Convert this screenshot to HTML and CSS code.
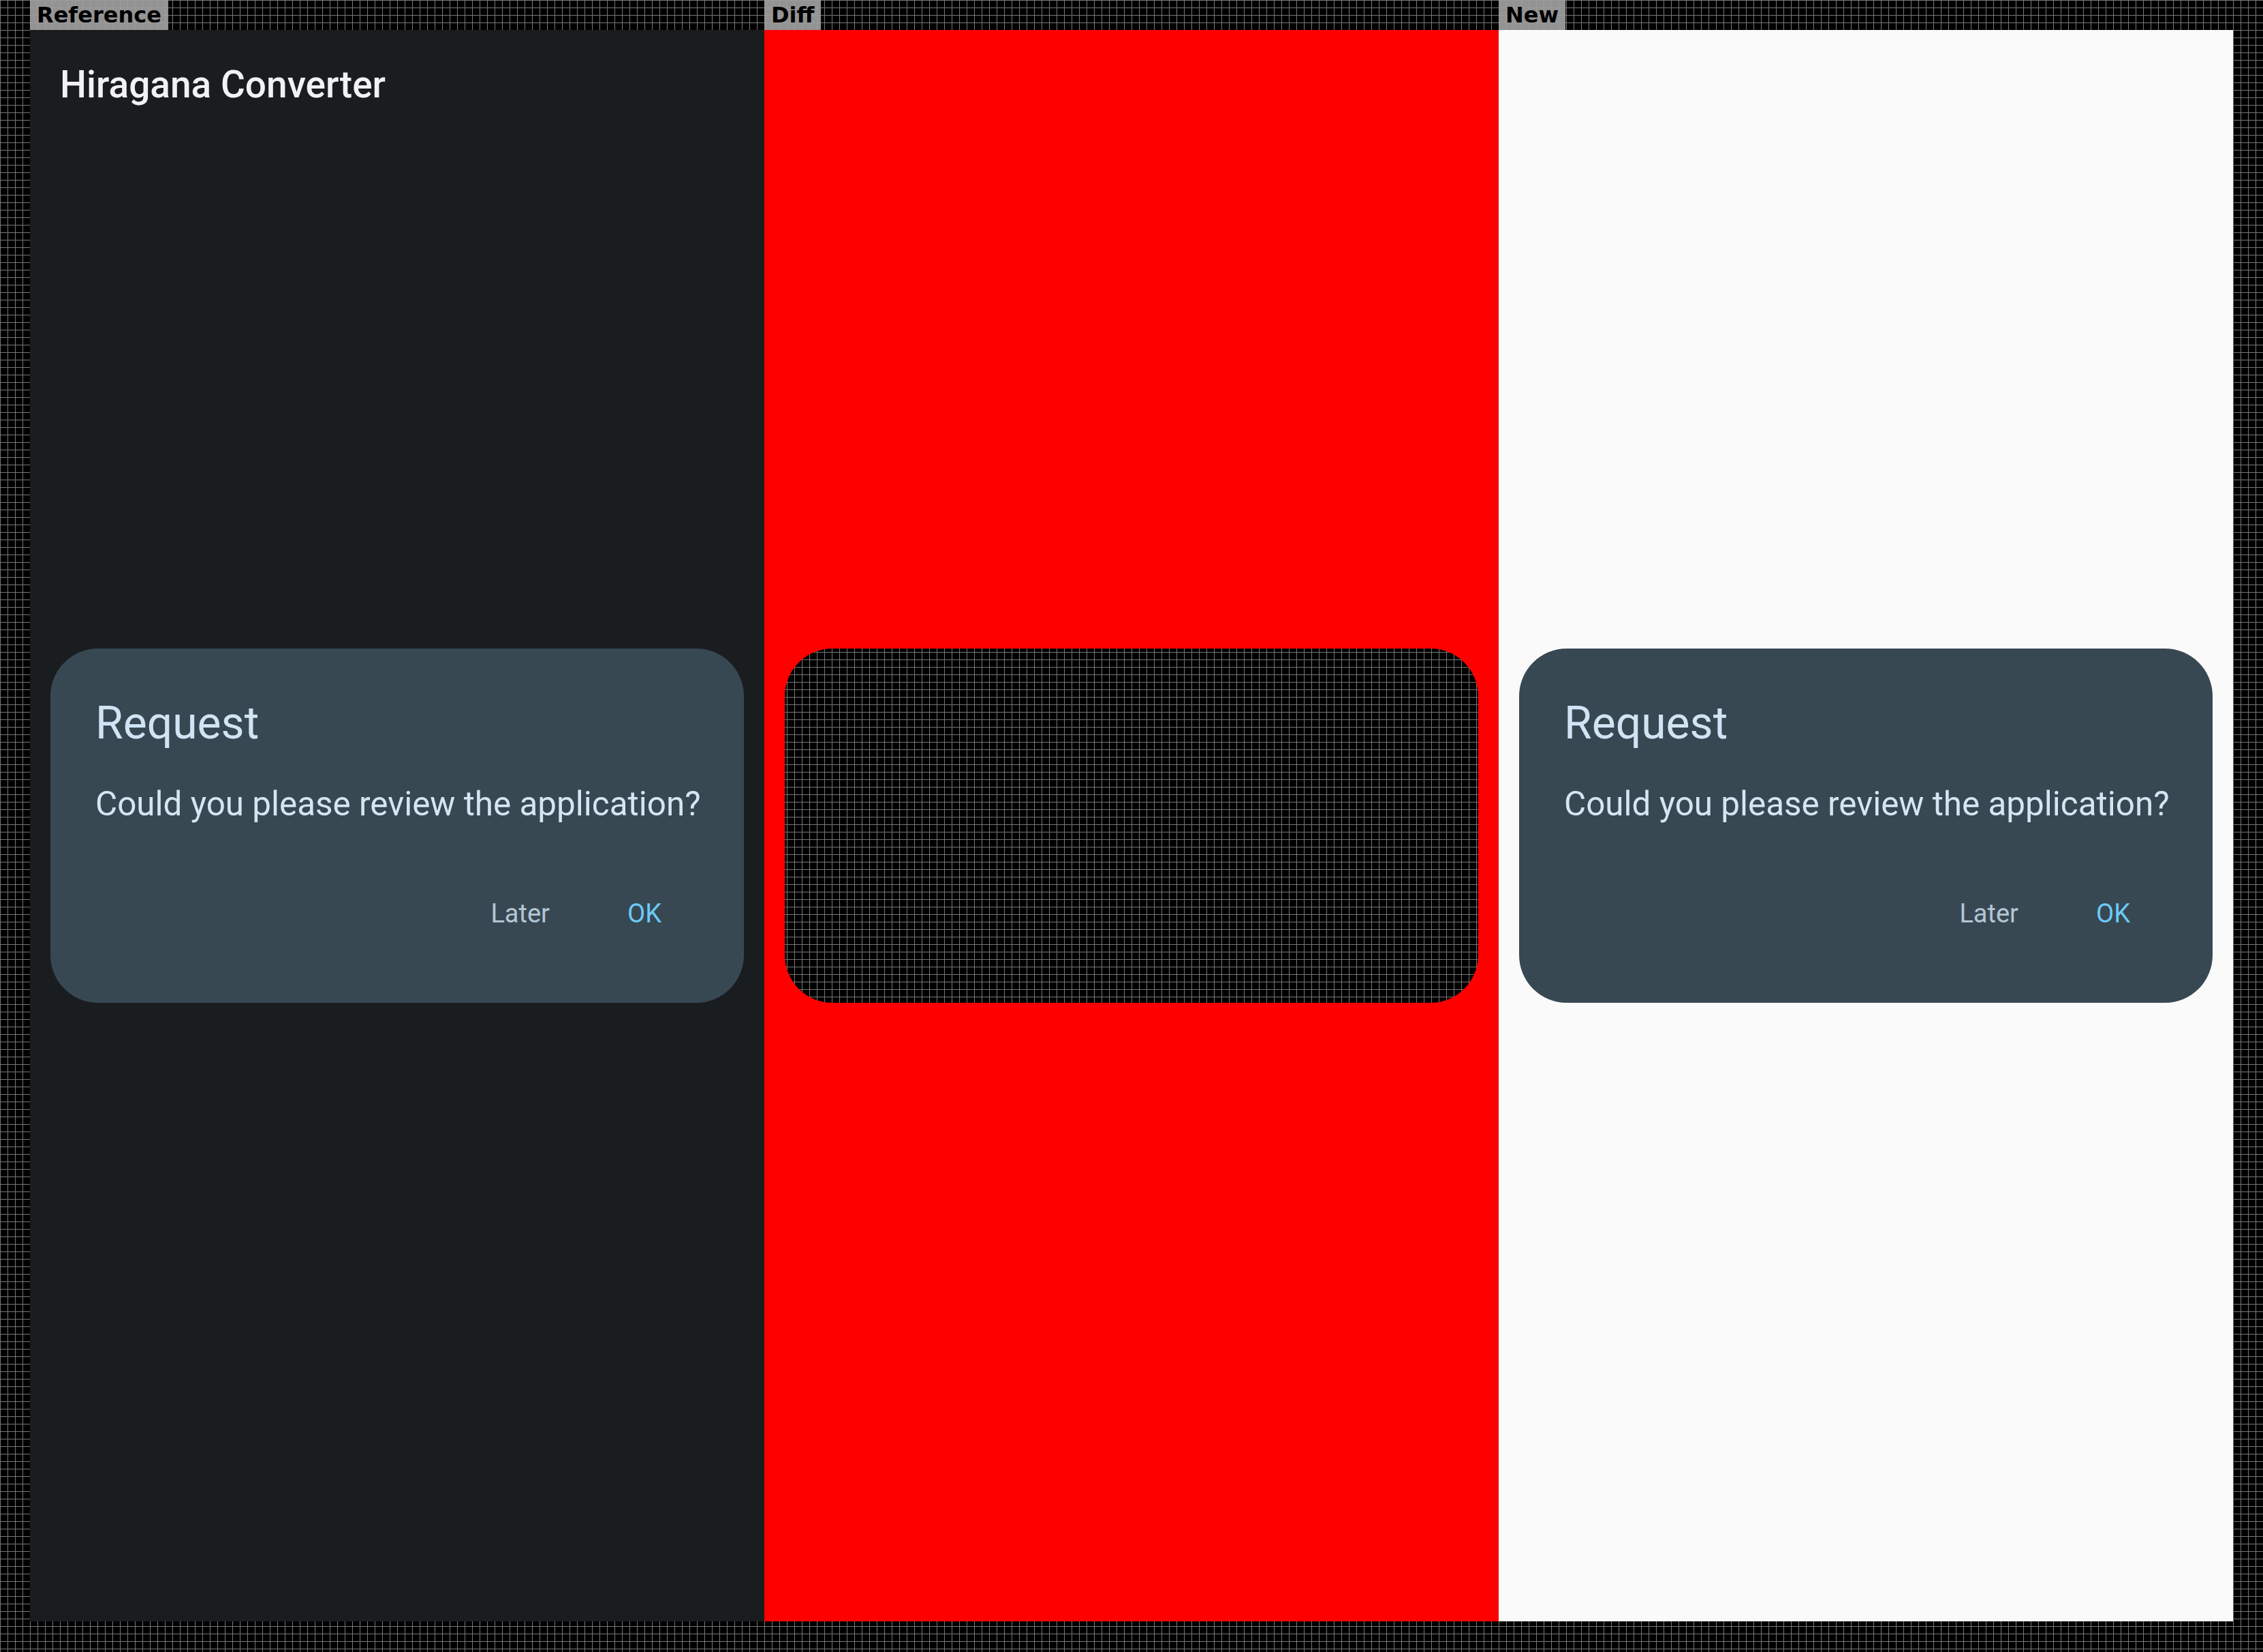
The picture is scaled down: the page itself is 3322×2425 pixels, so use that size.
FILE: index.html
```html
<!DOCTYPE html>
<html>
<head>
<meta charset="utf-8">
<title>Reference / Diff / New</title>
<link rel="stylesheet" href="styles.css">
</head>
<body>
<div class="stage">
  <section class="column">
    <div class="tag">Reference</div>
    <div class="panel panel-dark">
      <h1 class="app-title">Hiragana Converter</h1>
      <div class="dialog">
        <h2 class="dialog-title">Request</h2>
        <p class="dialog-text">Could you please review the application?</p>
        <div class="dialog-actions">
          <span class="btn btn-later">Later</span>
          <span class="btn btn-ok">OK</span>
        </div>
      </div>
    </div>
  </section>
  <section class="column">
    <div class="tag">Diff</div>
    <div class="panel panel-diff">
      <div class="diff-hole"></div>
    </div>
  </section>
  <section class="column">
    <div class="tag">New</div>
    <div class="panel panel-light">
      <div class="dialog">
        <h2 class="dialog-title">Request</h2>
        <p class="dialog-text">Could you please review the application?</p>
        <div class="dialog-actions">
          <span class="btn btn-later">Later</span>
          <span class="btn btn-ok">OK</span>
        </div>
      </div>
    </div>
  </section>
</div>
</body>
</html>
```
FILE: styles.css
```css
html, body {
  margin: 0;
  padding: 0;
}
body {
  width: 3322px;
  height: 2425px;
  overflow: hidden;
  background-color: #000;
  background-image:
    linear-gradient(to right, #777 0, #777 1px, transparent 1px),
    linear-gradient(to bottom, #777 0, #777 1px, transparent 1px);
  background-size: 11px 11px;
  background-position: 0 0;
  font-family: Roboto, "Noto Sans", sans-serif;
}
.stage {
  display: flex;
  padding: 0 44px;
}
.column {
  display: flex;
  flex-direction: column;
  width: 1078px;
}
.tag {
  align-self: flex-start;
  height: 44px;
  line-height: 44px;
  padding: 0 10px;
  background: rgba(160, 160, 160, 0.92);
  color: #000;
  font-family: "DejaVu Sans", sans-serif;
  font-weight: bold;
  font-size: 32px;
}
.panel {
  width: 1078px;
  height: 2336px;
  display: grid;
  grid-template: 1fr / 1fr;
  overflow: hidden;
}
.panel > * {
  grid-area: 1 / 1;
}
.panel-dark {
  background: #1a1d20;
}
.panel-light {
  background: #fafafa;
}
.panel-diff {
  background: transparent;
}
.app-title {
  align-self: start;
  margin: 47px 0 0 44px;
  font-size: 55px;
  line-height: 66px;
  font-weight: 500;
  color: #f2f2f4;
}
.dialog {
  align-self: center;
  justify-self: center;
  width: 1018px;
  height: 520px;
  box-sizing: border-box;
  border-radius: 70px;
  background: #384853;
  padding: 71px 0 0 66px;
  display: flex;
  flex-direction: column;
}
.dialog-title {
  margin: 0;
  font-size: 66px;
  font-weight: 400;
  line-height: 77px;
  color: #d0e4f4;
}
.dialog-text {
  margin: 51px 0 0 0;
  font-size: 49.4px;
  line-height: 58px;
  color: #d5e5f1;
}
.dialog-actions {
  display: flex;
  justify-content: flex-end;
  gap: 114px;
  margin-top: 109px;
  padding-right: 121px;
}
.btn {
  font-size: 38px;
  line-height: 47px;
}
.btn-later {
  color: #b3c7d3;
}
.btn-ok {
  color: #6ccbf8;
}
.diff-hole {
  align-self: center;
  justify-self: center;
  width: 1018px;
  height: 520px;
  border-radius: 70px;
  box-shadow: 0 0 0 2600px #ff0000;
}
```
